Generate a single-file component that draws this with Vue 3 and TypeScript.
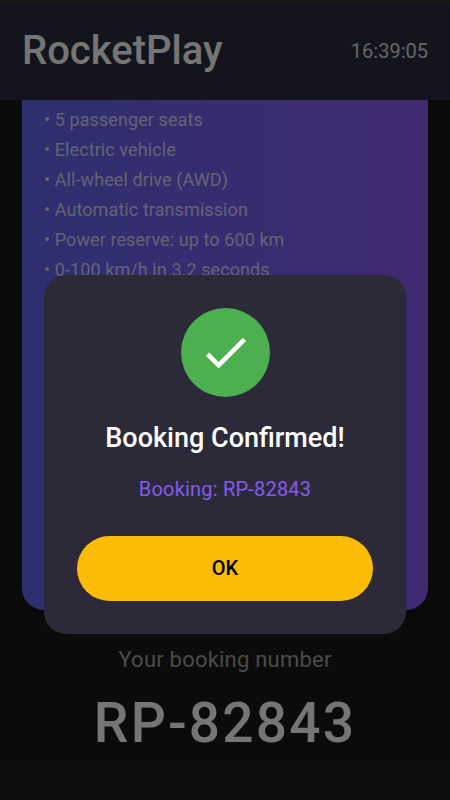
<script setup lang="ts">
import { ref } from 'vue'

const bookingNumber = 'RP-82843'
const time = '16:39:05'
const features: string[] = [
  '5 passenger seats',
  'Electric vehicle',
  'All-wheel drive (AWD)',
  'Automatic transmission',
  'Power reserve: up to 600 km',
  '0-100 km/h in 3.2 seconds',
]
const dialogOpen = ref(true)
</script>

<template>
  <div class="screen">
    <header class="topbar">
      <h1 class="brand">RocketPlay</h1>
      <time class="clock">{{ time }}</time>
    </header>

    <main class="content">
      <section class="car-card">
        <ul class="features">
          <li v-for="feature in features" :key="feature">• {{ feature }}</li>
        </ul>
      </section>
      <section class="summary">
        <p class="summary-label">Your booking number</p>
        <p class="summary-number">{{ bookingNumber }}</p>
      </section>
    </main>

    <div v-if="dialogOpen" class="scrim">
      <div class="dialog" role="dialog" aria-modal="true" aria-labelledby="dialog-title">
        <div class="badge">
          <svg class="check" viewBox="0 0 24 24" aria-hidden="true">
            <path d="M9 16.17L4.83 12l-1.42 1.41L9 19 21 7l-1.41-1.41z" />
          </svg>
        </div>
        <h2 id="dialog-title" class="dialog-title">Booking Confirmed!</h2>
        <p class="dialog-text">Booking: {{ bookingNumber }}</p>
        <button class="ok" type="button" @click="dialogOpen = false">OK</button>
      </div>
    </div>
  </div>
</template>

<style>
body {
  margin: 0;
  background: #0b0b0b;
}
</style>

<style scoped>
.screen {
  position: relative;
  display: flex;
  flex-direction: column;
  min-height: 100vh;
  background: #1a1a1a;
  color: #fff;
  font-family: Roboto, "Liberation Sans", sans-serif;
}

h1,
h2,
p,
ul {
  margin: 0;
  padding: 0;
}

.topbar {
  display: flex;
  align-items: center;
  justify-content: space-between;
  padding: 27px 22px 25px;
  background: #2b2d3d;
  box-shadow: inset 0 4px #2e3236;
}

.brand {
  font-size: 40px;
  font-weight: 500;
  line-height: 48px;
}

.clock {
  color: rgba(255, 255, 255, 0.85);
  font-size: 20px;
  line-height: 24px;
}

.content {
  display: flex;
  flex: 1;
  flex-direction: column;
}

.car-card {
  flex: 1;
  margin: 0 22px;
  padding: 5px 22px;
  border-radius: 0 0 22px 22px;
  background: linear-gradient(90deg, #6366f1, #8b5cf6);
  box-shadow: 0 8px 16px rgba(0, 0, 0, 0.3);
}

.features {
  list-style: none;
  color: rgba(255, 255, 255, 0.75);
  font-size: 18px;
  line-height: 30px;
  letter-spacing: 0.005em;
}

.summary {
  padding: 36px 22px 44px;
  text-align: center;
}

.summary-label {
  color: rgba(255, 255, 255, 0.6);
  font-size: 22px;
  line-height: 28px;
  letter-spacing: 0.01em;
}

.summary-number {
  margin-top: 16px;
  font-size: 55px;
  font-weight: 500;
  line-height: 66px;
  letter-spacing: 0.04em;
}

.scrim {
  position: absolute;
  inset: 0;
  display: flex;
  align-items: center;
  justify-content: center;
  padding: 109px 44px 0;
  background: rgba(0, 0, 0, 0.54);
}

.dialog {
  display: flex;
  flex: 1;
  flex-direction: column;
  align-items: center;
  padding: 33px;
  border-radius: 22px;
  background: #2c2a39;
  text-align: center;
}

.badge {
  display: flex;
  align-items: center;
  justify-content: center;
  width: 89px;
  height: 89px;
  border-radius: 50%;
  background: #4caf50;
}

.check {
  width: 55px;
  height: 55px;
  fill: #fff;
}

.dialog-title {
  margin-top: 25px;
  font-size: 27px;
  font-weight: 500;
  line-height: 32px;
}

.dialog-text {
  margin-top: 22px;
  color: #855af0;
  font-size: 20px;
  line-height: 26px;
  letter-spacing: 0.01em;
}

.ok {
  width: 100%;
  margin-top: 34px;
  padding: 20px;
  border: 0;
  border-radius: 33px;
  background: #fbbc05;
  color: #000;
  font: inherit;
  font-size: 20px;
  font-weight: 500;
  line-height: 25px;
  cursor: pointer;
}
</style>
